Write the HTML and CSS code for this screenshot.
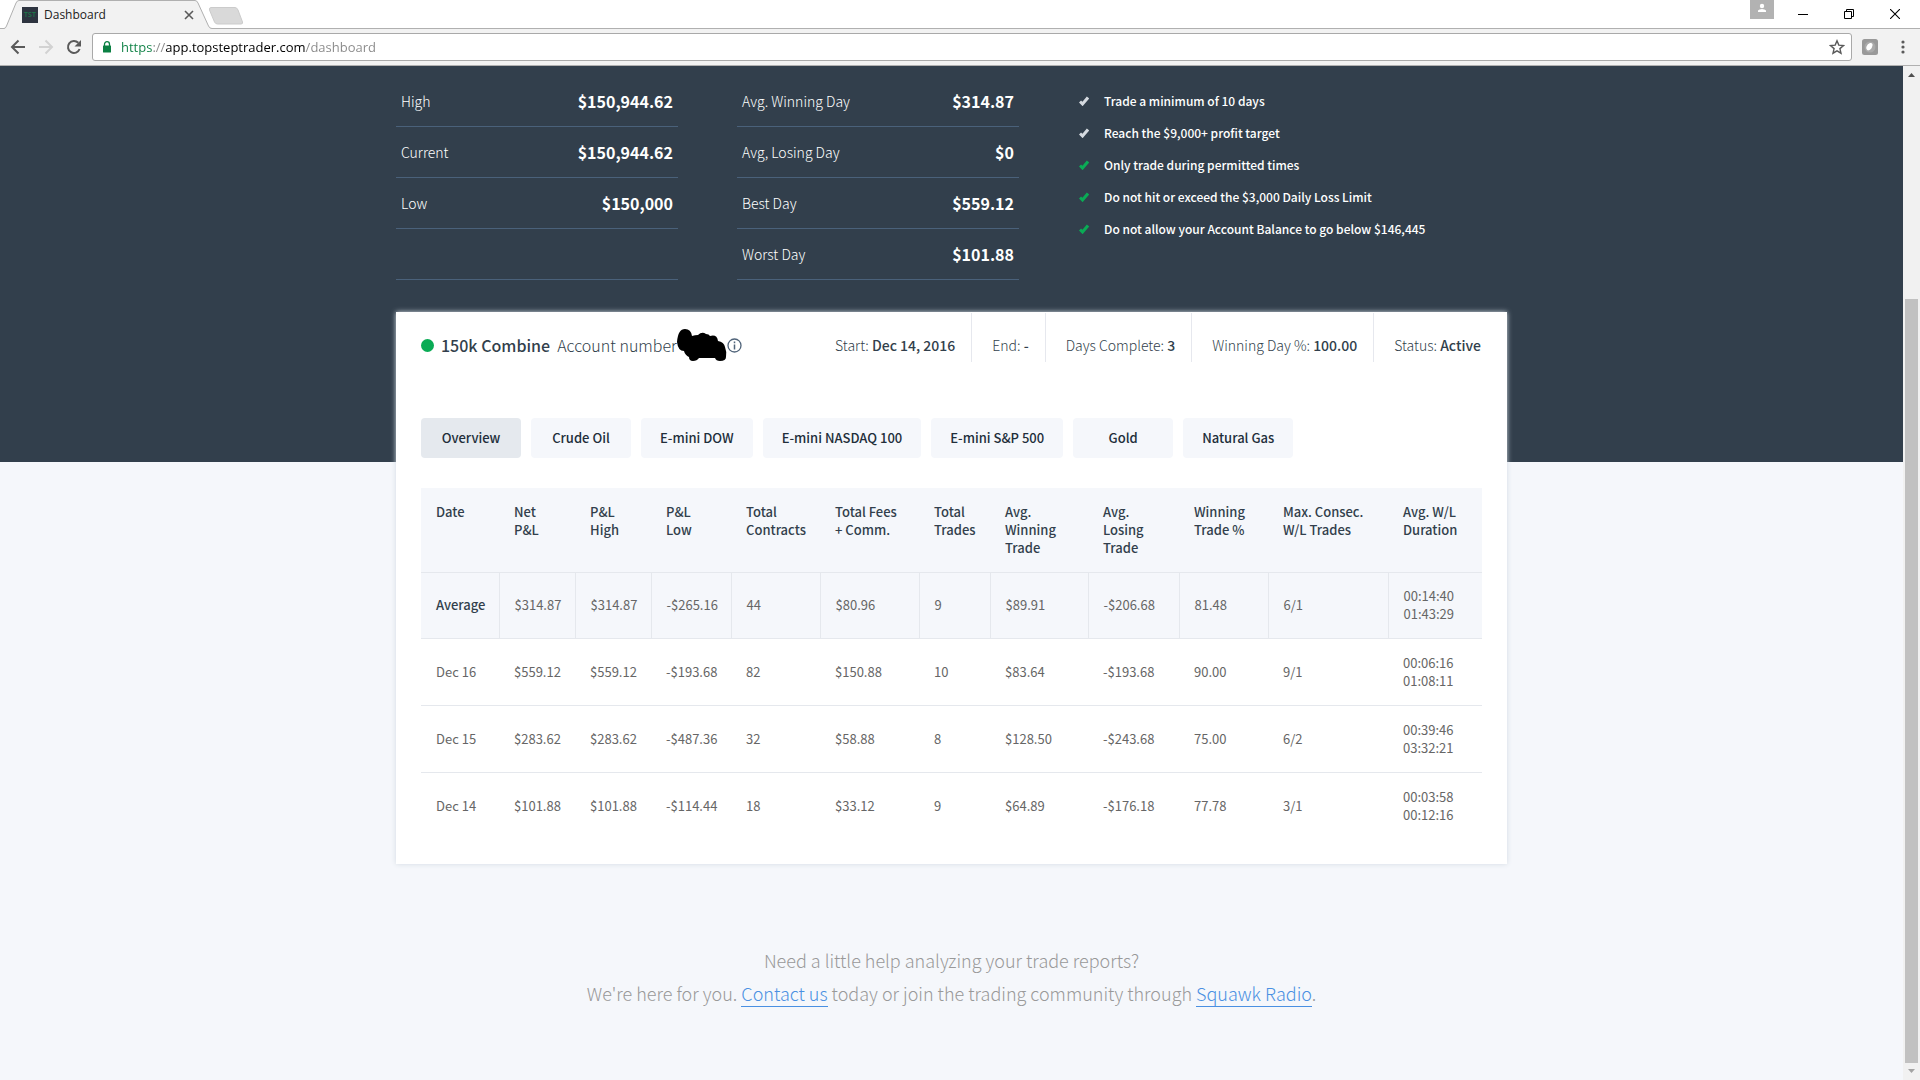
FILE: index.html
```html
<!DOCTYPE html>
<html lang="en">
<head>
  <meta charset="UTF-8">
  <meta name="viewport" content="width=device-width, initial-scale=1.0">
  <title>Dashboard</title>
  <link rel="stylesheet" href="styles.css">
</head>
<body>
  <header class="browser">
    <div class="tab-strip">
      <div class="tab">
        <svg class="tab-shape" width="208" height="29" viewBox="0 0 208 29">
          <path d="M0 28.5 C1.500 28.500 2 27.500 2.500 26 L12 3 Q13 .5 15 .5 H191 Q193 .5 194 3 L204.500 26 Q205.500 28.500 208 28.500 V29 H0 Z" fill="#f2f2f2"/>
          <path d="M0 28.500 Q1.500 28.500 2.500 26 L12 3 Q13 .5 15 .5 H191 Q193 .5 194 3 L204.500 26 Q205.500 28.500 208 28.500" fill="none" stroke="#b0b0b0"/>
        </svg>
        <span class="favicon">TST</span>
        <span class="tab-title">Dashboard</span>
        <button class="icon-btn tab-close" aria-label="Close tab">
          <svg width="10" height="10" viewBox="0 0 10 10"><path d="M1 1l8 8M9 1l-8 8" stroke="#5a5a5a" stroke-width="1.600"/></svg>
        </button>
      </div>
      <button class="icon-btn new-tab" aria-label="New tab">
        <svg width="36" height="18" viewBox="0 0 36 18"><path d="M3 .5 H27 Q29 .5 30 3 L34.500 15 Q35 17 33 17 H9.500 Q7.500 17 6.500 15 L1.500 3 Q1 .5 3 .5Z" fill="#d9d9d9" stroke="#cbcbcb"/></svg>
      </button>
      <div class="window-controls">
        <button class="icon-btn profile" aria-label="Profile">
          <svg width="24" height="19" viewBox="0 0 24 19"><path d="M0 0h24v19H0z" fill="#b2b2b2"/><circle cx="12" cy="6" r="2.200" fill="#fff"/><path d="M8 12v-1.500q1-1.500 4-1.500t4 1.500V12z" fill="#fff"/></svg>
        </button>
        <button class="icon-btn window-btn" aria-label="Minimize">
          <svg width="10" height="10" viewBox="0 0 10 10"><path d="M0 5.500h10" stroke="#000"/></svg>
        </button>
        <button class="icon-btn window-btn" aria-label="Restore">
          <svg width="10" height="10" viewBox="0 0 10 10" fill="none" stroke="#000"><path d="M.5 2.500h7v7h-7z"/><path d="M2.500 2.500v-2h7v7h-2"/></svg>
        </button>
        <button class="icon-btn window-btn" aria-label="Close">
          <svg width="10" height="10" viewBox="0 0 10 10"><path d="M0 0l10 10M10 0L0 10" stroke="#000" stroke-width="1.100"/></svg>
        </button>
      </div>
    </div>
    <div class="toolbar">
      <button class="icon-btn nav-btn" aria-label="Back">
        <svg width="16" height="16" viewBox="0 0 16 16" fill="none" stroke="#5a5a5a" stroke-width="2"><path d="M15 8H2.500M8.500 1.500L2 8l6.500 6.500"/></svg>
      </button>
      <button class="icon-btn nav-btn" aria-label="Forward" disabled>
        <svg width="16" height="16" viewBox="0 0 16 16" fill="none" stroke="#d2d2d2" stroke-width="2"><path d="M1 8h12.500M7.500 1.500L14 8l-6.500 6.500"/></svg>
      </button>
      <button class="icon-btn nav-btn" aria-label="Reload">
        <svg width="16" height="16" viewBox="0 0 16 16"><path d="M13.600 10A6 6 0 1 1 12.300 3.800" fill="none" stroke="#5a5a5a" stroke-width="2"/><path d="M15 1v6.500H8.500z" fill="#5a5a5a"/></svg>
      </button>
      <div class="address-bar">
        <svg width="10" height="12" viewBox="0 0 10 12"><path d="M2.500 5V3.200a2.500 2.500 0 0 1 5 0V5" fill="none" stroke="#0b8043" stroke-width="1.300"/><rect x="1" y="4.500" width="8" height="7" rx=".5" fill="#0b8043"/></svg>
        <input class="address-input" type="text" aria-label="Address" value="https://app.topsteptrader.com/dashboard">
        <button class="icon-btn" aria-label="Bookmark this page">
          <svg width="16" height="16" viewBox="0 0 16 16"><path d="M8 1.800l1.800 4.300 4.700.4-3.600 3.100 1.100 4.600L8 11.800l-4 2.400 1.100-4.600L1.500 6.500l4.700-.4z" fill="none" stroke="#5a5a5a" stroke-width="1.400"/></svg>
        </button>
      </div>
      <button class="icon-btn extension" aria-label="Extension">
        <svg width="16" height="16" viewBox="0 0 16 16"><rect width="16" height="16" rx="2.500" fill="#999"/><circle cx="8" cy="8" r="5.500" fill="#aaa"/><path d="M8 4q3-.5 2.500 2.500Q9.500 11 6 11.500 3.500 10 4.500 7.500 5.500 4.500 8 4z" fill="#fff"/></svg>
      </button>
      <button class="icon-btn menu" aria-label="Menu">
        <svg width="4" height="14" viewBox="0 0 4 14" fill="#5a5a5a"><circle cx="2" cy="2" r="1.600"/><circle cx="2" cy="7" r="1.600"/><circle cx="2" cy="12" r="1.600"/></svg>
      </button>
    </div>
  </header>

  <div class="viewport">
    <main class="page">
      <section class="hero">
        <div class="container stats">
          <dl class="stat-list">
            <div class="stat-item"><dt>High</dt><dd>$150,944.62</dd></div>
            <div class="stat-item"><dt>Current</dt><dd>$150,944.62</dd></div>
            <div class="stat-item"><dt>Low</dt><dd>$150,000</dd></div>
            <div class="stat-item"></div>
          </dl>
          <dl class="stat-list">
            <div class="stat-item"><dt>Avg. Winning Day</dt><dd>$314.87</dd></div>
            <div class="stat-item"><dt>Avg, Losing Day</dt><dd>$0</dd></div>
            <div class="stat-item"><dt>Best Day</dt><dd>$559.12</dd></div>
            <div class="stat-item"><dt>Worst Day</dt><dd>$101.88</dd></div>
          </dl>
          <ul class="rules">
            <li><svg class="check" viewBox="0 0 10 10"><path d="M1 5.500l2.500 2.500L9 1.500"/></svg>Trade a minimum of 10 days</li>
            <li><svg class="check" viewBox="0 0 10 10"><path d="M1 5.500l2.500 2.500L9 1.500"/></svg>Reach the $9,000+ profit target</li>
            <li><svg class="check check-done" viewBox="0 0 10 10"><path d="M1 5.500l2.500 2.500L9 1.500"/></svg>Only trade during permitted times</li>
            <li><svg class="check check-done" viewBox="0 0 10 10"><path d="M1 5.500l2.500 2.500L9 1.500"/></svg>Do not hit or exceed the $3,000 Daily Loss Limit</li>
            <li><svg class="check check-done" viewBox="0 0 10 10"><path d="M1 5.500l2.500 2.500L9 1.500"/></svg>Do not allow your Account Balance to go below $146,445</li>
          </ul>
        </div>
      </section>

      <section class="container card">
        <div class="card-header">
          <span class="status-dot"></span>
          <h1 class="account-name">150k Combine</h1>
          <span class="account-number">Account number</span>
          <svg width="50" height="34" viewBox="0 0 50 34"><path d="M0 14Q1 1 8 1q6 0 7 7 3-1 6-1 4-4 8-1 3 0 4 2 7-2 8 5 6 1 7 6 2 5 1 10 0 4-6 4-4 0-5-3H22q-2 3-6 3-4 0-4-4-4-2-5-6-6 0-7-9z"/></svg>
          <svg width="15" height="15" viewBox="0 0 15 15" fill="none" stroke="#50647a"><circle cx="7.500" cy="7.500" r="6.500" stroke-width="1.300"/><path d="M7.500 6.500v5M7.500 3.500v1.700" stroke-width="1.500"/></svg>
          <ul class="account-meta">
            <li>Start: <b>Dec 14, 2016</b></li>
            <li>End: <b>-</b></li>
            <li>Days Complete: <b>3</b></li>
            <li>Winning Day %: <b>100.00</b></li>
            <li>Status: <b>Active</b></li>
          </ul>
        </div>

        <div class="tabs">
          <button class="btn active">Overview</button>
          <button class="btn">Crude Oil</button>
          <button class="btn">E-mini DOW</button>
          <button class="btn">E-mini NASDAQ 100</button>
          <button class="btn">E-mini S&amp;P 500</button>
          <button class="btn">Gold</button>
          <button class="btn">Natural Gas</button>
        </div>

        <table class="report">
          <colgroup>
            <col class="col-date"><col class="col-pl"><col class="col-pl"><col class="col-low">
            <col class="col-contracts"><col class="col-fees"><col class="col-trades"><col class="col-winning">
            <col class="col-losing"><col class="col-contracts"><col class="col-consec"><col>
          </colgroup>
          <thead>
            <tr>
              <th>Date</th>
              <th>Net<br>P&amp;L</th>
              <th>P&amp;L<br>High</th>
              <th>P&amp;L<br>Low</th>
              <th>Total<br>Contracts</th>
              <th>Total Fees<br>+ Comm.</th>
              <th>Total<br>Trades</th>
              <th>Avg.<br>Winning<br>Trade</th>
              <th>Avg.<br>Losing<br>Trade</th>
              <th>Winning<br>Trade %</th>
              <th>Max. Consec.<br>W/L Trades</th>
              <th>Avg. W/L<br>Duration</th>
            </tr>
          </thead>
          <tbody>
            <tr class="average">
              <th>Average</th><td>$314.87</td><td>$314.87</td><td>-$265.16</td><td>44</td><td>$80.96</td><td>9</td>
              <td>$89.91</td><td>-$206.68</td><td>81.48</td><td>6/1</td><td>00:14:40<br>01:43:29</td>
            </tr>
            <tr>
              <td>Dec 16</td><td>$559.12</td><td>$559.12</td><td>-$193.68</td><td>82</td><td>$150.88</td><td>10</td>
              <td>$83.64</td><td>-$193.68</td><td>90.00</td><td>9/1</td><td>00:06:16<br>01:08:11</td>
            </tr>
            <tr>
              <td>Dec 15</td><td>$283.62</td><td>$283.62</td><td>-$487.36</td><td>32</td><td>$58.88</td><td>8</td>
              <td>$128.50</td><td>-$243.68</td><td>75.00</td><td>6/2</td><td>00:39:46<br>03:32:21</td>
            </tr>
            <tr>
              <td>Dec 14</td><td>$101.88</td><td>$101.88</td><td>-$114.44</td><td>18</td><td>$33.12</td><td>9</td>
              <td>$64.89</td><td>-$176.18</td><td>77.78</td><td>3/1</td><td>00:03:58<br>00:12:16</td>
            </tr>
          </tbody>
        </table>
      </section>

      <p class="help">Need a little help analyzing your trade reports?<br>
        We're here for you. <a href="#">Contact us</a> today or join the trading community through <a href="#">Squawk Radio</a>.</p>
    </main>

    <div class="scrollbar">
      <svg width="7" height="4" viewBox="0 0 7 4"><path d="M0 4L3.500 0 7 4z" fill="#505050"/></svg>
      <div class="scroll-track"><div class="scroll-thumb"></div></div>
      <svg width="7" height="4" viewBox="0 0 7 4"><path d="M0 0l3.500 4L7 0z" fill="#a3a3a3"/></svg>
    </div>
  </div>
</body>
</html>
```
FILE: styles.css
```css
* {
  box-sizing: border-box;
}

body {
  height: 100vh;
  margin: 0;
  display: flex;
  flex-direction: column;
  overflow: hidden;
  background: #f5f7fb;
  color: #323f4c;
  font-family: "Source Sans Pro", "Noto Sans CJK SC", sans-serif;
  font-size: 13px;
  line-height: 18px;
}

svg {
  display: block;
  flex: none;
}

ul, dl, dd, h1, p {
  margin: 0;
  padding: 0;
}

ul {
  list-style: none;
}

/* browser window */

.browser {
  flex: none;
  font-family: "Segoe UI", "Open Sans", sans-serif;
}

.icon-btn {
  display: flex;
  align-items: center;
  justify-content: center;
  flex: none;
  padding: 0;
  border: none;
  background: none;
}

.tab-strip {
  display: flex;
  height: 29px;
  padding-left: 4px;
  background: #fff;
  border-bottom: 1px solid #b0b0b0;
}

.tab {
  position: relative;
  display: flex;
  align-items: center;
  width: 208px;
  height: 29px;
  padding: 1px 18px 0 18px;
}

.tab-shape {
  position: absolute;
  top: 0;
  left: 0;
}

.favicon {
  position: relative;
  width: 16px;
  height: 16px;
  margin-right: 6px;
  background: #2e3440;
  color: #1c7a4a;
  font-size: 7px;
  font-weight: 600;
  line-height: 16px;
  text-align: center;
}

.tab-title {
  position: relative;
  flex: 1;
  color: #222;
  font-size: 12px;
}

.tab-close {
  position: relative;
}

.new-tab {
  margin: 3px 0 0 -4px;
}

.window-controls {
  display: flex;
  align-items: center;
  margin-left: auto;
}

.profile {
  align-self: flex-start;
  margin-right: 6px;
}

.window-btn {
  width: 46px;
  height: 28px;
}

.window-btn:last-child {
  margin-right: 2px;
}

.toolbar {
  display: flex;
  align-items: center;
  height: 37px;
  padding-left: 4px;
  background: #f2f2f2;
  border-bottom: 1px solid #b0b0b0;
}

.nav-btn {
  width: 28px;
  height: 28px;
}

.address-bar {
  display: flex;
  align-items: center;
  flex: 1;
  height: 28px;
  margin-left: 4px;
  padding: 0 6px 0 9px;
  background: #fff;
  border: 1px solid #a9a9a9;
  border-radius: 3px;
}

/* scheme, host and path each have their own colour */
.address-input {
  flex: 1;
  margin-left: 9px;
  padding: 0;
  border: none;
  outline: none;
  background: linear-gradient(to right, #0b8043 32px, #888 32px, #888 45px, #000 45px, #000 184px, #888 184px);
  background-clip: text;
  -webkit-background-clip: text;
  color: transparent;
  font: 13px "Segoe UI", "Open Sans", sans-serif;
}

.extension {
  margin: 0 23px 0 10px;
}

.menu {
  margin-right: 15px;
}

.viewport {
  display: flex;
  flex: 1;
  min-height: 0;
}

.page {
  flex: 1;
  overflow: hidden;
}

.scrollbar {
  display: flex;
  flex-direction: column;
  align-items: center;
  gap: 6px;
  width: 17px;
  padding: 7px 0 7px;
  background: #f1f1f1;
}

.scroll-track {
  display: flex;
  flex-direction: column;
  justify-content: flex-end;
  flex: 1;
}

.scroll-thumb {
  width: 13px;
  height: 78%;
  background: #c1c1c1;
}

/* page */

.container {
  width: 1111px;
  max-width: 100%;
  margin: 0 auto;
}

.hero {
  padding: 10px 0 182px;
  background: #323f4c;
  color: #fff;
}

.stats {
  display: grid;
  grid-template-columns: 282px 282px 1fr;
  column-gap: 59px;
}

.stat-item {
  display: flex;
  justify-content: space-between;
  height: 51px;
  padding: 0 5px;
  border-bottom: 1px solid #4a617a;
  line-height: 50px;
}

.stat-item dt {
  font-size: 14px;
  font-weight: 300;
}

.stat-item dd {
  font-size: 16px;
  font-weight: 700;
}

.rules {
  padding-top: 9px;
}

.rules li {
  display: flex;
  align-items: center;
  height: 32px;
  font-size: 12px;
  font-weight: 500;
}

.check {
  width: 10px;
  height: 10px;
  margin: 0 15px 0 1px;
  fill: none;
  stroke: #d5dae0;
  stroke-width: 3;
}

.check-done {
  stroke: #0aab55;
}

.card {
  position: relative;
  margin-top: -150px;
  padding: 1px 25px 25px;
  background: #fff;
  box-shadow: 0 0 5px #d3dae2;
}

.card-header {
  display: flex;
  align-items: center;
  height: 49px;
  padding-top: 15px;
  margin-bottom: 56px;
}

.status-dot {
  width: 13px;
  height: 13px;
  margin-right: 7px;
  background: #0aab55;
  border-radius: 50%;
}

.account-name {
  margin-right: 7px;
  font-size: 16px;
  font-weight: 500;
}

.account-number {
  font-size: 16px;
  font-weight: 300;
}

.account-meta {
  display: flex;
  align-self: flex-end;
  margin-left: auto;
  font-size: 14px;
  font-weight: 300;
  line-height: 18px;
}

.account-meta li {
  height: 49px;
  padding: 23px 16px 0 20px;
  border-right: 1px solid #e6e8ee;
}

.account-meta li:last-child {
  padding-right: 1px;
  border-right: none;
}

.account-meta b {
  font-weight: 500;
}

.tabs {
  display: flex;
  gap: 10px;
  margin-bottom: 30px;
}

.btn {
  min-width: 100px;
  height: 40px;
  padding: 0 19px;
  border: none;
  border-radius: 4px;
  background: #f5f7fb;
  color: #222e3a;
  font: inherit;
  font-weight: 500;
}

.btn.active {
  background: #e5e9ee;
}

.report {
  width: 100%;
  border-collapse: collapse;
  table-layout: fixed;
}

.col-date { width: 78px; }
.col-pl { width: 76px; }
.col-low { width: 80px; }
.col-contracts { width: 89px; }
.col-fees { width: 99px; }
.col-trades { width: 71px; }
.col-winning { width: 98px; }
.col-losing { width: 91px; }
.col-consec { width: 120px; }

.report th,
.report td {
  height: 67px;
  padding: 0 0 0 15px;
  border-bottom: 1px solid #e5e8ed;
  text-align: left;
  white-space: nowrap;
}

.report th {
  font-weight: 500;
}

.report td {
  color: #666;
}

.report thead th {
  height: 84px;
  padding-top: 15px;
  vertical-align: top;
}

.report thead,
.average {
  background: #f5f7fb;
}

.report .average th,
.report .average td {
  height: 66px;
}

.average td {
  border-left: 1px solid #e5e8ed;
}

.report tbody tr:last-child td {
  border-bottom: none;
}

.help {
  margin-top: 80px;
  color: #999;
  font-size: 18px;
  font-weight: 300;
  line-height: 33px;
  text-align: center;
}

.help a {
  border-bottom: 1px solid #4a90e2;
  color: #4a90e2;
  text-decoration: none;
}
```
